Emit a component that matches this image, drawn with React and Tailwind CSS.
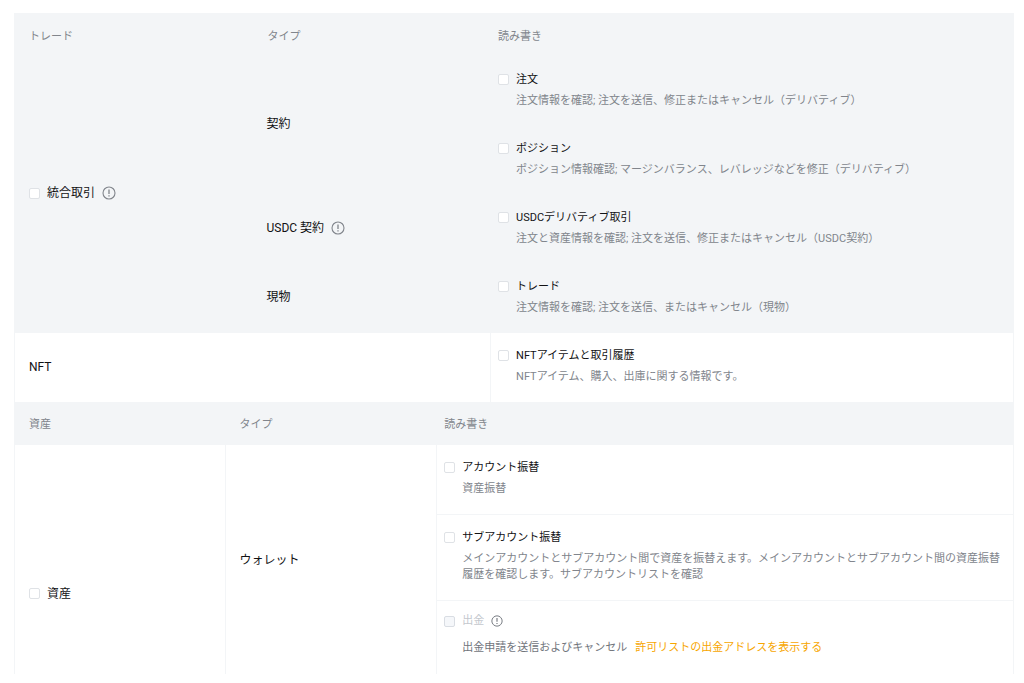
import React, { useState } from 'react';

const tradeGroups = [
    {
        type: '契約',
        items: [
            { id: 'order', title: '注文', desc: '注文情報を確認; 注文を送信、修正またはキャンセル（デリバティブ）' },
            { id: 'position', title: 'ポジション', desc: 'ポジション情報確認; マージンバランス、レバレッジなどを修正（デリバティブ）' },
        ],
    },
    {
        type: 'USDC 契約',
        info: true,
        items: [
            { id: 'usdc', title: 'USDCデリバティブ取引', desc: '注文と資産情報を確認; 注文を送信、修正またはキャンセル（USDC契約）' },
        ],
    },
    {
        type: '現物',
        items: [
            { id: 'spot', title: 'トレード', desc: '注文情報を確認; 注文を送信、またはキャンセル（現物）' },
        ],
    },
];

const nftItem = { id: 'nft', title: 'NFTアイテムと取引履歴', desc: 'NFTアイテム、購入、出庫に関する情報です。' };

const walletItems = [
    { id: 'transfer', title: 'アカウント振替', desc: '資産振替' },
    {
        id: 'subTransfer',
        title: 'サブアカウント振替',
        desc: 'メインアカウントとサブアカウント間で資産を振替えます。メインアカウントとサブアカウント間の資産振替履歴を確認します。サブアカウントリストを確認',
    },
];

function InfoIcon({ className }) {
    return (
        <svg viewBox="0 0 14 14" className={className} fill="none" stroke="currentColor" strokeWidth="1.1" aria-hidden="true">
            <circle cx="7" cy="7" r="6" />
            <path d="M7 3.5v4.5M7 9.2v1.4" strokeWidth="1.3" />
        </svg>
    );
}

function Checkbox(props) {
    return (
        <input
            type="checkbox"
            className="size-[11px] shrink-0 appearance-none rounded-xs border border-[#dfe2e6] bg-white checked:border-[#f7a600] checked:bg-[#f7a600] disabled:border-[#d9dde3] disabled:bg-[#f5f7fa]"
            {...props}
        />
    );
}

function Permission({ item, checked, onToggle }) {
    return (
        <div className="pt-[11px] pr-3 pb-[17px] pl-[7px]">
            <div className="flex h-[22px] items-center gap-[7px]">
                <Checkbox id={item.id} checked={checked} onChange={() => onToggle(item.id)} />
                <label htmlFor={item.id} className="pt-[2px] text-[11px] text-[#121214]">{item.title}</label>
            </div>
            <p className="mt-[3px] pl-[18px] text-[11px] leading-4 text-[#81858c]">{item.desc}</p>
        </div>
    );
}

function HeadRow({ labels }) {
    return (
        <tr className="h-[43px] bg-[#f3f5f7] text-left text-[11px] text-[#81858c]">
            <th scope="col" className="pt-[3px] pl-[14px] font-normal">{labels[0]}</th>
            <th scope="col" className="pt-[3px] pl-[15px] font-normal">{labels[1]}</th>
            <th scope="col" className="pt-[3px] pl-2 font-normal">{labels[2]}</th>
        </tr>
    );
}

function App() {
    const [selected, setSelected] = useState({});

    const toggle = (id) => setSelected({ ...selected, [id]: !selected[id] });

    const tradeIds = tradeGroups.flatMap((g) => g.items.map((i) => i.id));
    const allTrade = tradeIds.every((id) => selected[id]);
    const allAssets = walletItems.every((i) => selected[i.id]);

    const toggleAll = (ids, value) => {
        const next = { ...selected };
        ids.forEach((id) => { next[id] = value; });
        setSelected(next);
    };

    return (
        <main className="bg-white pt-[13px] pr-[10px] pl-[14px] font-['Roboto','Noto_Sans_CJK_JP',sans-serif] text-xs text-[#121214]" lang="ja">
            <div className="border-x border-t border-[#f3f5f7]">
                {/* トレード */}
                <table className="w-full table-fixed border-separate border-spacing-0">
                    <colgroup>
                        <col className="w-[23.8%]" />
                        <col className="w-[23.8%]" />
                        <col />
                    </colgroup>
                    <thead><HeadRow labels={['トレード', 'タイプ', '読み書き']} /></thead>
                    <tbody>
                        {tradeGroups.map((group, g) => group.items.map((item, i) => (
                            <tr key={item.id} className="bg-[#f3f5f7]">
                                {g === 0 && i === 0 && (
                                    <td rowSpan={tradeIds.length} className="pb-1 pl-[14px]">
                                        <div className="flex items-center gap-[7px]">
                                            <Checkbox id="allTrade" checked={allTrade} onChange={() => toggleAll(tradeIds, !allTrade)} />
                                            <label htmlFor="allTrade">統合取引</label>
                                            <InfoIcon className="size-[14px] text-[#81858c]" />
                                        </div>
                                    </td>
                                )}
                                {i === 0 && (
                                    <td rowSpan={group.items.length} className="pb-1 pl-[14px]">
                                        <div className="flex items-center gap-[7px]">
                                            {group.type}
                                            {group.info && <InfoIcon className="size-[14px] text-[#81858c]" />}
                                        </div>
                                    </td>
                                )}
                                <td className="border-l border-[#f3f5f7] p-0">
                                    <Permission item={item} checked={!!selected[item.id]} onToggle={toggle} />
                                </td>
                            </tr>
                        )))}
                        <tr>
                            <td colSpan={2} className="pb-[2px] pl-[14px]">NFT</td>
                            <td className="border-l border-[#f3f5f7] p-0">
                                <Permission item={nftItem} checked={!!selected.nft} onToggle={toggle} />
                            </td>
                        </tr>
                    </tbody>
                </table>

                {/* 資産 */}
                <table className="w-full table-fixed border-separate border-spacing-0">
                    <colgroup>
                        <col className="w-[21%]" />
                        <col className="w-[21.2%]" />
                        <col />
                    </colgroup>
                    <thead><HeadRow labels={['資産', 'タイプ', '読み書き']} /></thead>
                    <tbody>
                        {walletItems.map((item, i) => (
                            <tr key={item.id}>
                                {i === 0 && (
                                    <>
                                        <td rowSpan={3} className="pt-[68px] pl-[14px]">
                                            <div className="flex items-center gap-[7px]">
                                                <Checkbox id="allAssets" checked={allAssets} onChange={() => toggleAll(walletItems.map((w) => w.id), !allAssets)} />
                                                <label htmlFor="allAssets">資産</label>
                                            </div>
                                        </td>
                                        <td rowSpan={3} className="border-l border-[#f3f5f7] pl-[14px]">ウォレット</td>
                                    </>
                                )}
                                <td className="border-l border-[#f3f5f7] p-0">
                                    <div className="border-b border-[#f3f5f7]">
                                        <Permission item={item} checked={!!selected[item.id]} onToggle={toggle} />
                                    </div>
                                </td>
                            </tr>
                        ))}
                        <tr>
                            <td className="border-l border-[#f3f5f7] p-0">
                                <div className="pt-[9px] pr-3 pb-[18px] pl-[7px]">
                                    <div className="flex h-[22px] items-center gap-[7px] text-[11px]">
                                        <Checkbox id="withdraw" disabled />
                                        <label htmlFor="withdraw" className="text-[#c4c8ce]">出金</label>
                                        <InfoIcon className="size-3 text-[#71757c]" />
                                    </div>
                                    <p className="mt-2 pl-[18px] text-[11px] leading-4 text-[#71757c]">
                                        出金申請を送信およびキャンセル
                                        <a href="#whitelist" className="ml-2 text-[#f7a600]">許可リストの出金アドレスを表示する</a>
                                    </p>
                                </div>
                            </td>
                        </tr>
                    </tbody>
                </table>
            </div>
        </main>
    );
}

export default App;
